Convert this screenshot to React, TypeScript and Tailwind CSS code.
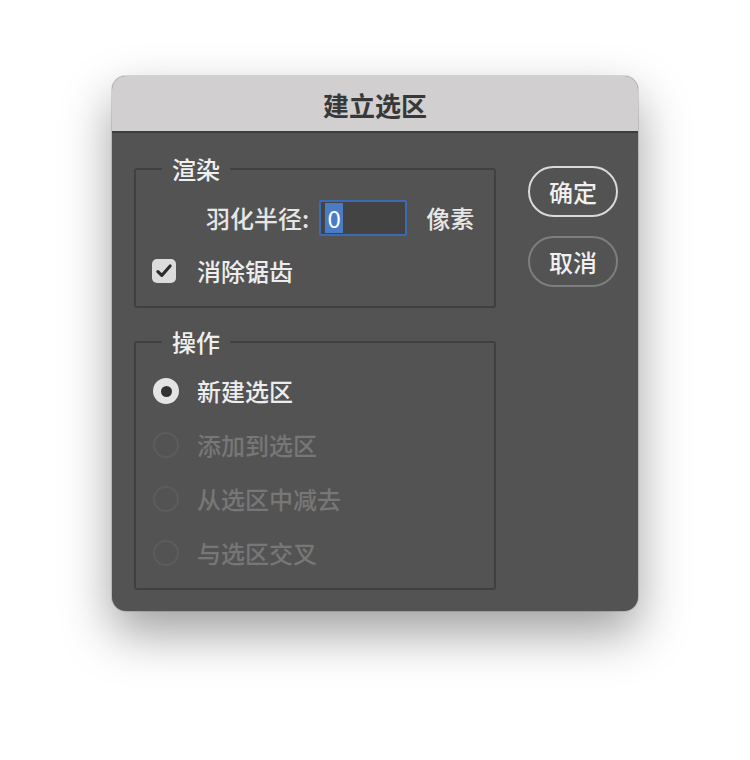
import React from "react";

const font = { fontFamily: '"Noto Sans CJK SC", "Noto Sans", sans-serif' };

function Radio({ checked, disabled, label }: { checked?: boolean; disabled?: boolean; label: string }) {
  return (
    <div className="flex h-[54px] items-center">
      {checked ? (
        <div className="ml-[17px] flex h-[26px] w-[26px] items-center justify-center rounded-full bg-[#e4e4e4]">
          <div className="h-[11px] w-[11px] rounded-full bg-[#333333]" />
        </div>
      ) : (
        <div className="ml-[17px] h-[26px] w-[26px] rounded-full border-2 border-[#5c5c5c]" />
      )}
      <span
        className={`ml-[18px] text-[24px] font-medium leading-none ${disabled ? "text-[#777777]" : "text-[#ededed]"}`}
      >
        {label}
      </span>
    </div>
  );
}

export default function App() {
  return (
    <div className="flex min-h-[760px] w-[750px] justify-center bg-white pt-[76px]" style={font}>
      <div className="h-[535px] w-[526px] overflow-hidden rounded-[14px] bg-[#535353] shadow-[0_22px_50px_rgba(0,0,0,0.38),0_0_0_1px_rgba(0,0,0,0.12)]">
        <div className="flex h-[57px] items-center justify-center border-b-2 border-[#3c3c3c] bg-[#d1cfd0] pt-[2px]">
          <span className="text-[26px] font-bold leading-none text-[#383838]">建立选区</span>
        </div>
        <div className="flex pl-[22px] pr-[20px] pt-[24px]">
          <div className="flex w-[362px] shrink-0 flex-col gap-[22px]">
            <fieldset className="rounded-[3px] border-2 border-[#404040] pb-[23px]">
              <legend className="ml-[26px] px-[10px] text-[24px] font-medium leading-[24px] text-[#efefef]">渲染</legend>
              <div className="flex items-center pl-[70px] pt-[19px]">
                <span className="text-[24px] font-medium leading-none text-[#e6e6e6]">羽化半径:</span>
                <div className="ml-[10px] flex h-[36px] w-[88px] items-center rounded-[2px] border-2 border-[#3b6bb5] bg-[#434343] pl-[4px]">
                  <span className="flex h-[30px] w-[18px] items-center justify-center bg-[#4a7bc3] text-[24px] leading-none text-white">
                    0
                  </span>
                </div>
                <span className="ml-[19px] text-[24px] font-medium leading-none text-[#e6e6e6]">像素</span>
              </div>
              <div className="mt-[23px] flex items-center pl-[16px]">
                <div className="flex h-[24px] w-[24px] items-center justify-center rounded-[5px] bg-[#dcdcdc]">
                  <svg width="20" height="20" viewBox="0 0 18 18">
                    <path d="M3.5 9.5 L7 13 L14.5 4.5" fill="none" stroke="#2b2b2b" strokeWidth="2.8" strokeLinecap="round" strokeLinejoin="round" />
                  </svg>
                </div>
                <span className="ml-[21px] text-[24px] font-medium leading-none text-[#ededed]">消除锯齿</span>
              </div>
            </fieldset>
            <fieldset className="rounded-[3px] border-2 border-[#404040] pb-[8px]">
              <legend className="ml-[26px] px-[10px] text-[24px] font-medium leading-[24px] text-[#efefef]">操作</legend>
              <div className="flex flex-col pt-[10px]">
                <Radio checked label="新建选区" />
                <Radio disabled label="添加到选区" />
                <Radio disabled label="从选区中减去" />
                <Radio disabled label="与选区交叉" />
              </div>
            </fieldset>
          </div>
          <div className="ml-[32px] flex shrink-0 flex-col gap-[19px] pt-[9px]">
            <button className="flex h-[51px] w-[90px] items-center justify-center rounded-full border-2 border-[#dadada] text-[24px] font-medium leading-none text-[#f0f0f0]">
              确定
            </button>
            <button className="flex h-[51px] w-[90px] items-center justify-center rounded-full border-2 border-[#7e7e7e] text-[24px] font-medium leading-none text-[#f0f0f0]">
              取消
            </button>
          </div>
        </div>
      </div>
    </div>
  );
}
